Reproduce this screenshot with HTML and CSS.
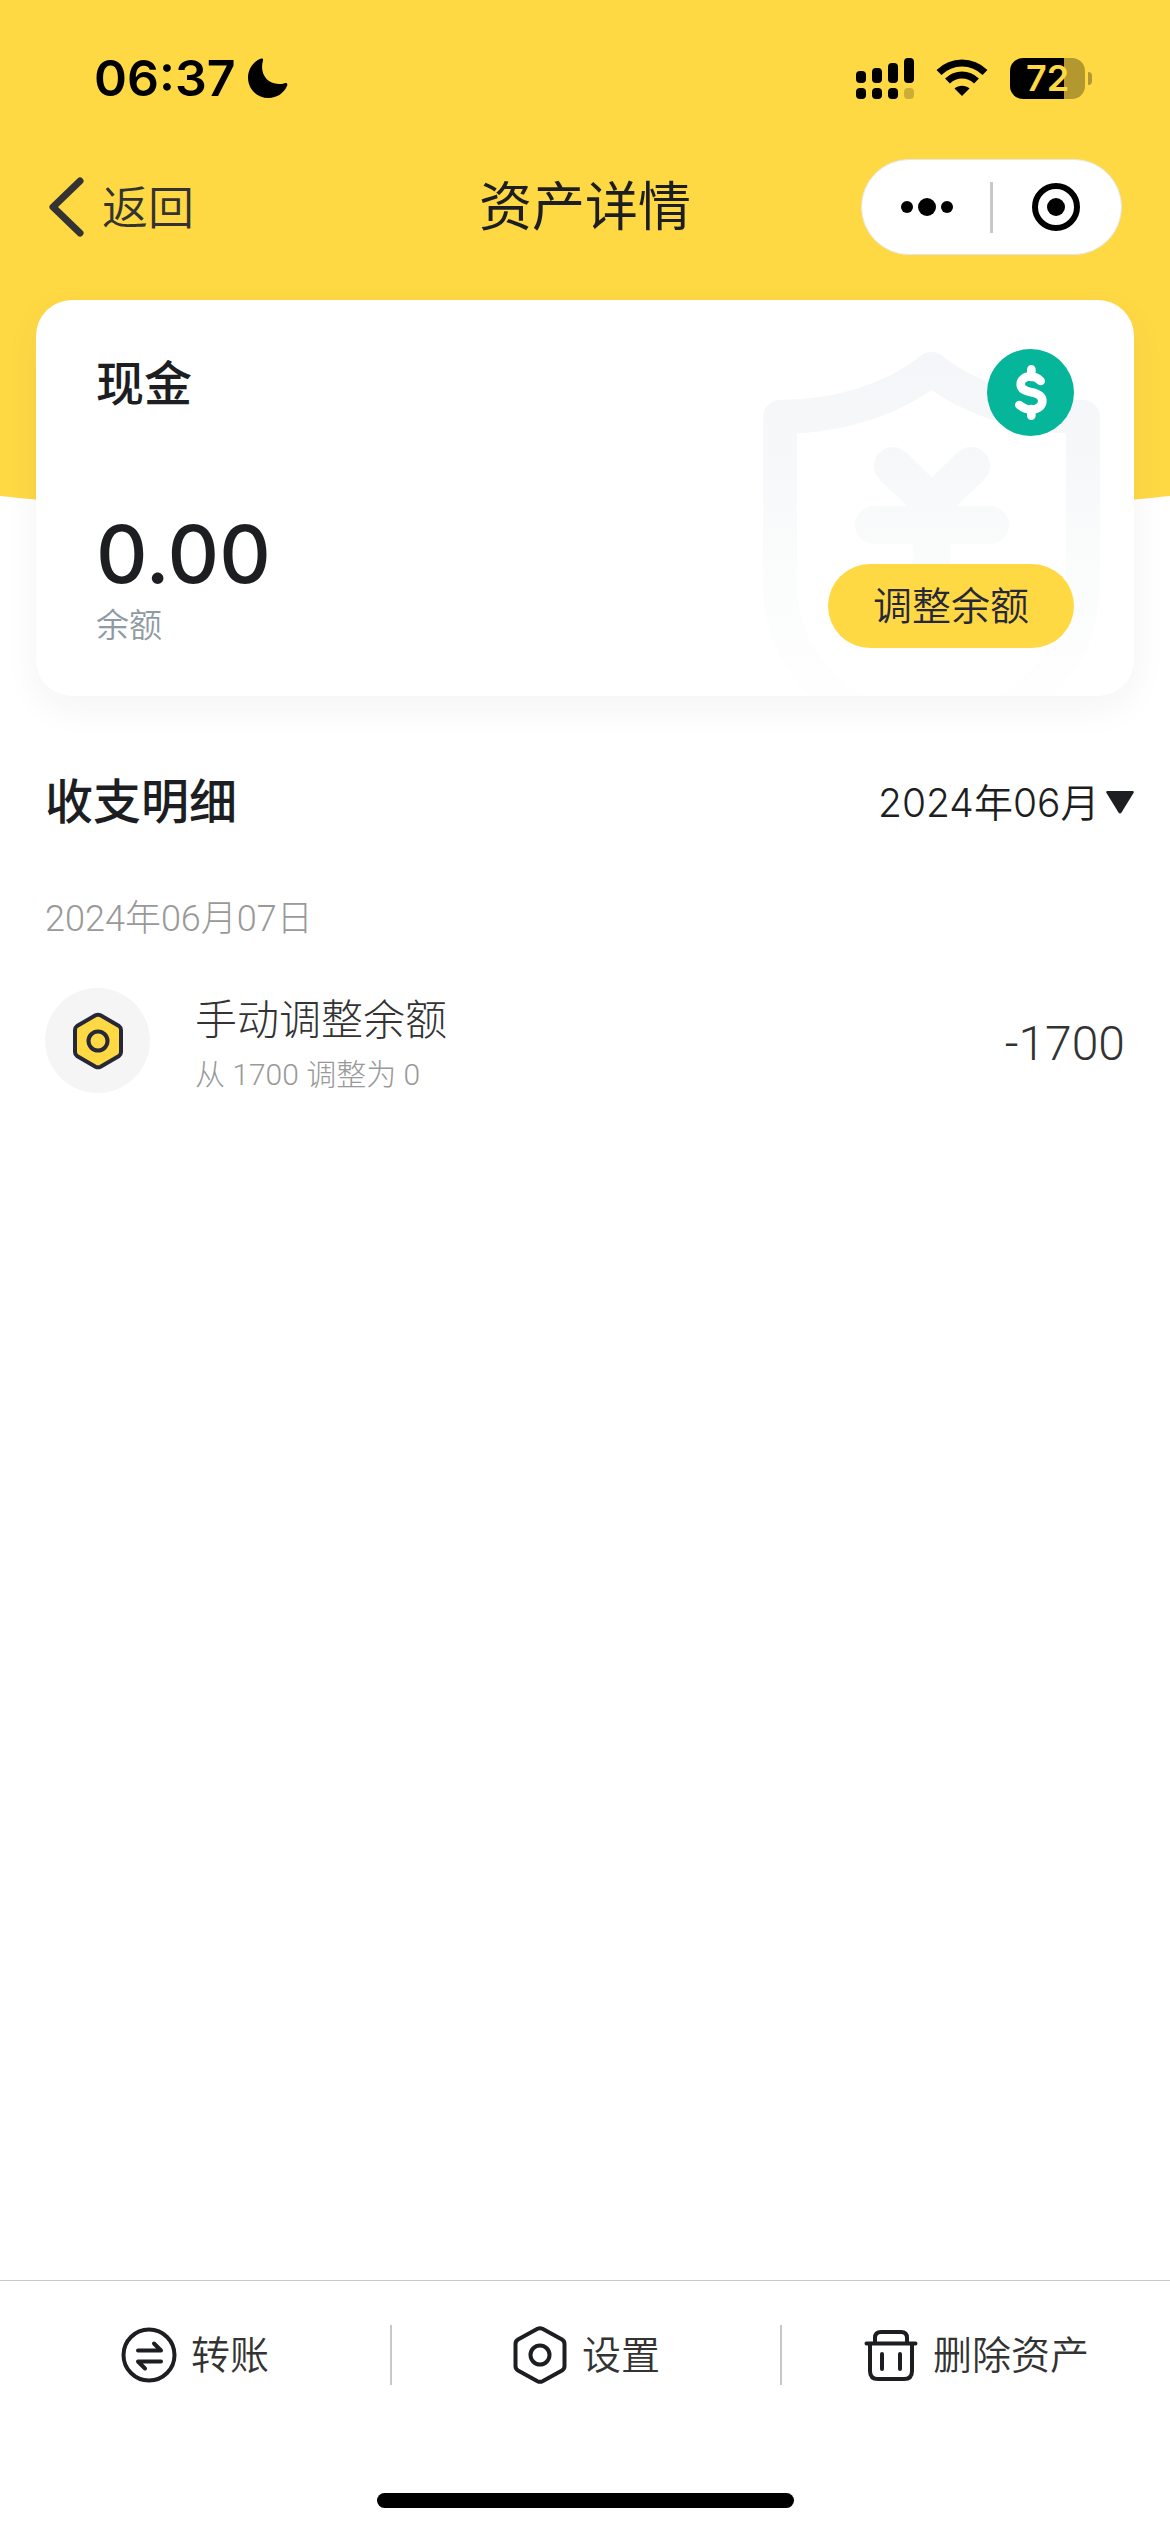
FILE: index.html
```html
<!DOCTYPE html>
<html lang="zh-CN">
<head>
<meta charset="utf-8">
<meta name="viewport" content="width=device-width">
<title>资产详情</title>
<link rel="stylesheet" href="styles.css">
</head>
<body>
<header class="top">
  <div class="status-bar">
    <div class="status-group status-left">
      <time>06:37</time>
      <svg width="40" height="40" viewBox="0 0 40 40" aria-hidden="true"><path d="M12.500 .7C14 0 15.500 .5 15 2.500 11 16 20 29 36 25.500 38.500 24.500 40 25.500 39 28 36 35 29 40 20.500 40 9.500 40 0 31.500 0 19.500 0 11 5.500 3.500 12.500 .7Z"/></svg>
    </div>
    <div class="status-group status-right">
      <svg width="58" height="41" viewBox="0 0 58 41" aria-hidden="true">
        <rect y="13" width="10" height="12" rx="4"/><rect x="16" y="10" width="10" height="15" rx="4"/><rect x="32" y="5" width="10" height="20" rx="4"/><rect x="48" width="10" height="25" rx="4"/>
        <rect y="30" width="10" height="11" rx="4"/><rect x="16" y="30" width="10" height="11" rx="4"/><rect x="32" y="30" width="10" height="11" rx="4"/><rect x="48" y="30" width="10" height="11" rx="4" opacity=".2"/>
      </svg>
      <svg width="52" height="38" viewBox="0 0 52 38" aria-hidden="true">
        <g fill="none" stroke="#000" stroke-width="7"><path d="M3 13.500C16 .8 36 .8 49 13.500"/><path d="M11.500 22C20 14 32 14 40.500 22"/></g>
        <path d="M18.500 29.500C22.500 25.800 29.500 25.800 33.500 29.500L26 37Z"/>
      </svg>
      <span class="battery">72</span>
    </div>
  </div>
  <nav class="nav">
    <button class="back" type="button">
      <svg width="36" height="60" viewBox="0 0 36 60" aria-hidden="true"><path d="M32 4 5 30 32 56" fill="none" stroke="#333" stroke-width="7" stroke-linecap="round" stroke-linejoin="round"/></svg>
      返回
    </button>
    <h1>资产详情</h1>
    <div class="capsule">
      <button type="button" aria-label="更多"><svg width="52" height="18" viewBox="0 0 52 18"><circle cx="6" cy="9" r="6"/><circle cx="26" cy="9" r="9"/><circle cx="46" cy="9" r="6"/></svg></button>
      <button type="button" aria-label="关闭"><svg width="48" height="48" viewBox="0 0 48 48"><circle cx="24" cy="24" r="21" fill="none" stroke="#000" stroke-width="6"/><circle cx="24" cy="24" r="9"/></svg></button>
    </div>
  </nav>
</header>

<main>
  <section class="card">
    <svg class="watermark" width="337" height="344" viewBox="763 352 337 344" aria-hidden="true">
      <defs><linearGradient id="fade" gradientUnits="userSpaceOnUse" x1="0" y1="352" x2="0" y2="696"><stop offset="0" stop-color="#f5f6f9"/><stop offset=".35" stop-color="#f7f8f9"/><stop offset=".65" stop-color="#fbfcfc"/><stop offset="1" stop-color="#fefefe"/></linearGradient></defs>
      <g fill="none" stroke="url(#fade)" stroke-linecap="round" stroke-linejoin="round">
        <path stroke-width="34" d="M931.500 369C891 401 836 417 780 417V585C780 660 835 715 931.500 745 1028 715 1083 660 1083 585V417C1027 417 972 401 931.500 369Z"/>
        <path stroke-width="38" d="M893 466 931.500 504 971 466M874 525H990M931.500 504V610"/>
      </g>
    </svg>
    <div class="card-row">
      <h2 class="name">现金</h2>
      <svg class="coin" width="87" height="87" viewBox="0 0 261 261" aria-hidden="true">
        <circle cx="130.500" cy="130.500" r="130.500" fill="#05b69b"/>
        <path d="M133 61V84M133 180V200M161 96C151 86 142 82 131 82 114 82 101 92 101 106 101 121 114 126 133 130 153 134 166 142 166 156 166 171 152 182 133 182 118 182 108 177 97 168" fill="none" stroke="#fff" stroke-width="26" stroke-linecap="round" stroke-linejoin="round"/>
      </svg>
    </div>
    <div class="card-row card-row-end">
      <div>
        <div class="balance">0.00</div>
        <div class="balance-label">余额</div>
      </div>
      <button class="adjust" type="button">调整余额</button>
    </div>
  </section>

  <section class="records">
    <div class="records-head">
      <h2>收支明细</h2>
      <label class="month">
        <select aria-label="月份"><option>2024年06月</option></select>
        <svg width="28" height="23" viewBox="0 0 28 23" aria-hidden="true"><path d="M1.500 0H26.500Q28.500 0 27.500 2L15.500 21.500Q14 23.500 12.500 21.500L.5 2Q-.5 0 1.500 0Z" fill="#1d1e22"/></svg>
      </label>
    </div>
    <h3>2024年06月07日</h3>
    <ul>
      <li>
        <span class="record-icon"><svg width="52" height="58" viewBox="0 0 52 58" aria-hidden="true"><g fill="#ffd944" stroke="#27273a" stroke-width="4" stroke-linejoin="round"><path d="M23.500 3.300Q26 2 28.500 3.300L47 14Q49 15.500 49 18V40Q49 42.500 47 44L28.500 54.700Q26 56 23.500 54.700L5 44Q3 42.500 3 40V18Q3 15.500 5 14Z"/><circle cx="26" cy="29" r="9.500"/></g></svg></span>
        <div class="record-text">
          <div class="record-title">手动调整余额</div>
          <div class="record-note">从 1700 调整为 0</div>
        </div>
        <div class="amount">-1700</div>
      </li>
    </ul>
  </section>
</main>

<footer>
  <div class="actions">
    <button type="button">
      <svg width="56" height="56" viewBox="0 0 56 56" aria-hidden="true"><g fill="none" stroke="#1d1e22" stroke-width="4" stroke-linecap="round" stroke-linejoin="round"><circle cx="28" cy="28" r="25.500"/><path d="M17 23.500H40L33 16.500M40 34.500H17L24 41.500"/></g></svg>
      转账
    </button>
    <button type="button">
      <svg width="56" height="58" viewBox="0 0 56 58" aria-hidden="true"><g fill="none" stroke="#1d1e22" stroke-width="4" stroke-linejoin="round"><path d="M25.500 2.800Q28 1.500 30.500 2.800L50 13.500Q52.500 15 52.500 18V40Q52.500 43 50 44.500L30.500 55.200Q28 56.500 25.500 55.200L6 44.500Q3.500 43 3.500 40V18Q3.500 15 6 13.500Z"/><circle cx="28" cy="29" r="9.500"/></g></svg>
      设置
    </button>
    <button type="button">
      <svg width="56" height="56" viewBox="0 0 56 56" aria-hidden="true"><g fill="none" stroke="#1d1e22" stroke-width="4" stroke-linecap="round" stroke-linejoin="round"><path d="M3.500 16.500H52.500M12 16V11Q12 5 18 5H38Q44 5 44 11V16M7 17V44Q7 52 15 52H41Q49 52 49 44V17M19 27V42M37 27V42"/></g></svg>
      删除资产
    </button>
  </div>
  <div class="home-indicator"></div>
</footer>
</body>
</html>
```
FILE: styles.css
```css
* {
  box-sizing: border-box;
}

body {
  margin: 0;
  min-height: 100vh;
  display: flex;
  flex-direction: column;
  position: relative;
  background: #fff;
  color: #1d1e22;
  font-family: Inter, "Noto Sans CJK SC", sans-serif;
}

/* yellow backdrop with a shallow curved lower edge */
body::before {
  content: "";
  position: absolute;
  z-index: -1;
  inset: 0 0 auto;
  height: 525px;
  background: #ffd944;
  clip-path: ellipse(200% 912px at 50% -387px);
}

h1, h2, h3, ul {
  margin: 0;
  padding: 0;
  list-style: none;
}

button, select {
  appearance: none;
  border: 0;
  padding: 0;
  background: none;
  color: inherit;
  font: inherit;
}

svg {
  display: block;
  flex: none;
}

.status-bar {
  display: flex;
  justify-content: space-between;
  align-items: center;
  height: 156px;
  padding: 0 85px 0 94px;
}

.status-group {
  display: flex;
  align-items: center;
  color: #000;
}

.status-left {
  gap: 12px;
  font-size: 50px;
  font-weight: 600;
}

.status-right {
  gap: 22px;
}

.battery {
  position: relative;
  width: 75px;
  height: 41px;
  border-radius: 13px;
  background: linear-gradient(to right, #000 72%, #b39830 72%);
  color: #ffd944;
  font-size: 36px;
  font-weight: 600;
  line-height: 41px;
  text-align: center;
}

.battery::after {
  content: "";
  position: absolute;
  left: 78px;
  top: 14px;
  width: 4px;
  height: 13px;
  border-radius: 0 4px 4px 0;
  background: #b39830;
}

.nav {
  display: grid;
  grid-template-columns: 1fr auto 1fr;
  align-items: center;
  margin-top: 3px;
  padding: 0 48px;
}

.nav h1 {
  font-size: 53px;
  font-weight: 400;
  line-height: 64px;
}

.back {
  display: flex;
  align-items: center;
  justify-self: start;
  gap: 18px;
  color: #333;
  font-size: 46px;
  font-weight: 350;
  line-height: 60px;
}

.capsule {
  justify-self: end;
  display: flex;
  width: 261px;
  height: 96px;
  border: 1px solid #e6e6e6;
  border-radius: 48px;
  background: linear-gradient(#c8c8c8, #c8c8c8) center / 3px 51px no-repeat #fff;
}

.capsule button {
  flex: 1;
  display: flex;
  align-items: center;
  justify-content: center;
}

.card {
  position: relative;
  display: flex;
  flex-direction: column;
  justify-content: space-between;
  min-height: 396px;
  margin: 45px 36px 0;
  padding: 49px 60px 48px;
  border-radius: 36px;
  background: #fff;
  box-shadow: 0 12px 36px rgba(40, 40, 80, .05);
}

.watermark {
  position: absolute;
  right: 34px;
  top: 52px;
}

.card-row {
  position: relative;
  display: flex;
  justify-content: space-between;
  align-items: flex-start;
}

.card-row-end {
  align-items: flex-end;
}

.name, .records-head h2 {
  font-size: 48px;
  font-weight: 500;
  line-height: 70px;
}

.balance {
  font-size: 80px;
  font-weight: 500;
  line-height: 96px;
}

.balance-label {
  color: #8f9ba3;
  font-size: 33px;
  font-weight: 350;
  line-height: 46px;
}

.adjust {
  width: 246px;
  height: 84px;
  border-radius: 42px;
  background: #ffd944;
  color: #27273a;
  font-size: 39px;
  font-weight: 350;
  line-height: 60px;
}

.records {
  padding: 71px 45px 0;
}

.records-head {
  display: flex;
  justify-content: space-between;
  align-items: center;
  margin-right: -9px;
}

.month {
  display: flex;
  align-items: center;
  gap: 6px;
  font-size: 39px;
  font-weight: 350;
}

.records h3 {
  margin-top: 57px;
  color: #999;
  font-family: Roboto, "Noto Sans CJK SC", sans-serif;
  font-size: 36px;
  font-weight: 300;
  line-height: 50px;
}

.records li {
  display: flex;
  align-items: flex-start;
  margin-top: 44px;
  font-family: Roboto, "Noto Sans CJK SC", sans-serif;
  font-weight: 300;
}

.record-icon {
  display: flex;
  align-items: center;
  justify-content: center;
  width: 105px;
  height: 105px;
  border-radius: 50%;
  background: #f5f5f5;
}

.record-text {
  flex: 1;
  margin-left: 45px;
  padding-top: 3px;
}

.record-title {
  color: #333;
  font-size: 42px;
  line-height: 60px;
}

.record-note {
  color: #999;
  font-size: 30px;
  line-height: 48px;
}

.amount {
  align-self: center;
  color: #333;
  font-size: 48px;
  line-height: 60px;
}

footer {
  margin-top: auto;
  border-top: 1px solid #c8c8c8;
}

.actions {
  display: grid;
  grid-template-columns: repeat(3, 1fr);
  padding: 44px 0 108px;
}

.actions button {
  display: flex;
  align-items: center;
  justify-content: center;
  gap: 14px;
  height: 60px;
  color: #333;
  font-size: 39px;
  font-weight: 350;
  line-height: 60px;
}

.actions button + button {
  border-left: 2px solid #c8c8c8;
}

.home-indicator {
  width: 417px;
  height: 15px;
  margin: 0 auto 24px;
  border-radius: 8px;
  background: #000;
}
```
